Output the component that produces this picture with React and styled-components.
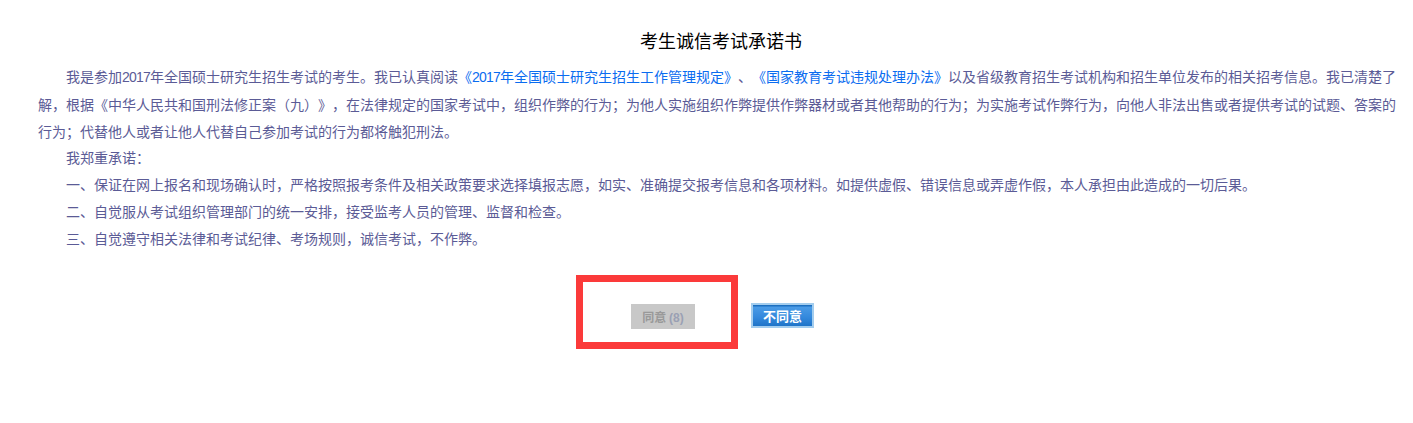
import React from "react";
import styled, { createGlobalStyle } from "styled-components";

const Global = createGlobalStyle`
  html, body { margin: 0; padding: 0; background: #fff; }
  body {
    font-family: "SimSun", "Noto Sans CJK SC", "Liberation Sans", sans-serif;
    text-spacing-trim: space-all;
  }
`;

const Page = styled.div`
  padding: 27px 9px 90px 38px;
  width: 1366px;
`;

const Title = styled.h1`
  margin: 0;
  font-size: 18px;
  line-height: 26px;
  font-weight: normal;
  color: #000;
  text-align: center;
`;

const Body = styled.div`
  margin-top: 10px;
  font-size: 14px;
  line-height: 26.8px;
  color: #5b5b96;
  text-spacing-trim: space-all;
`;

const Para = styled.p`
  margin: 0;
  text-indent: 28px;
  text-align: left;
`;

const Link = styled.span`
  color: #0a6cf0;
`;

const Num = styled.span`
  font-family: "Liberation Sans", sans-serif;
  letter-spacing: -0.78px;
`;

const ButtonRow = styled.div`
  display: flex;
  justify-content: center;
  align-items: center;
  gap: 56px;
  margin-top: 51px;
  padding-left: 3px;
`;

const Highlight = styled.div`
  position: relative;
`;

const RedBox = styled.div`
  position: absolute;
  left: -55px;
  top: -28px;
  width: 148px;
  height: 60px;
  border: 7px solid #fb3a3a;
  pointer-events: none;
`;

const AgreeButton = styled.button`
  display: block;
  width: 64px;
  height: 25px;
  margin: 1px 0 0;
  padding: 0;
  border: none;
  background: #c8c8c8;
  color: #999;
  font-family: "Noto Sans CJK SC", sans-serif;
  font-weight: bold;
  font-size: 12px;
  cursor: not-allowed;
`;

const Count = styled.span`
  color: #9aa0b4;
  font-family: "Liberation Sans", sans-serif;
`;

const DisagreeButton = styled.button`
  display: block;
  width: 63px;
  height: 25px;
  margin: 0;
  padding: 0;
  border: 2px solid #a3cdee;
  background: linear-gradient(#1c6fc0 0, #1c6fc0 1px, #4a9be6 2px, #3388dc 60%, #1f74c8 100%);
  color: #fff;
  font-family: "Noto Sans CJK SC", sans-serif;
  font-weight: bold;
  font-size: 13px;
  line-height: 19px;
  cursor: pointer;
`;

export default function App() {
  return (
    <>
      <Global />
      <Page>
        <Title>考生诚信考试承诺书</Title>
        <Body>
          <Para>
            我是参加<Num>2017</Num>年全国硕士研究生招生考试的考生。我已认真阅读
            <Link>《<Num>2017</Num>年全国硕士研究生招生工作管理规定》</Link>、
            <Link>《国家教育考试违规处理办法》</Link>
            以及省级教育招生考试机构和招生单位发布的相关招考信息。我已清楚了解，根据《中华人民共和国刑法修正案（九）》，在法律规定的国家考试中，组织作弊的行为；为他人实施组织作弊提供作弊器材或者其他帮助的行为；为实施考试作弊行为，向他人非法出售或者提供考试的试题、答案的行为；代替他人或者让他人代替自己参加考试的行为都将触犯刑法。
          </Para>
          <Para>我郑重承诺：</Para>
          <Para>一、保证在网上报名和现场确认时，严格按照报考条件及相关政策要求选择填报志愿，如实、准确提交报考信息和各项材料。如提供虚假、错误信息或弄虚作假，本人承担由此造成的一切后果。</Para>
          <Para>二、自觉服从考试组织管理部门的统一安排，接受监考人员的管理、监督和检查。</Para>
          <Para>三、自觉遵守相关法律和考试纪律、考场规则，诚信考试，不作弊。</Para>
        </Body>
        <ButtonRow>
          <Highlight>
            <AgreeButton disabled>
              同意 <Count>(8)</Count>
            </AgreeButton>
            <RedBox />
          </Highlight>
          <DisagreeButton>不同意</DisagreeButton>
        </ButtonRow>
      </Page>
    </>
  );
}
